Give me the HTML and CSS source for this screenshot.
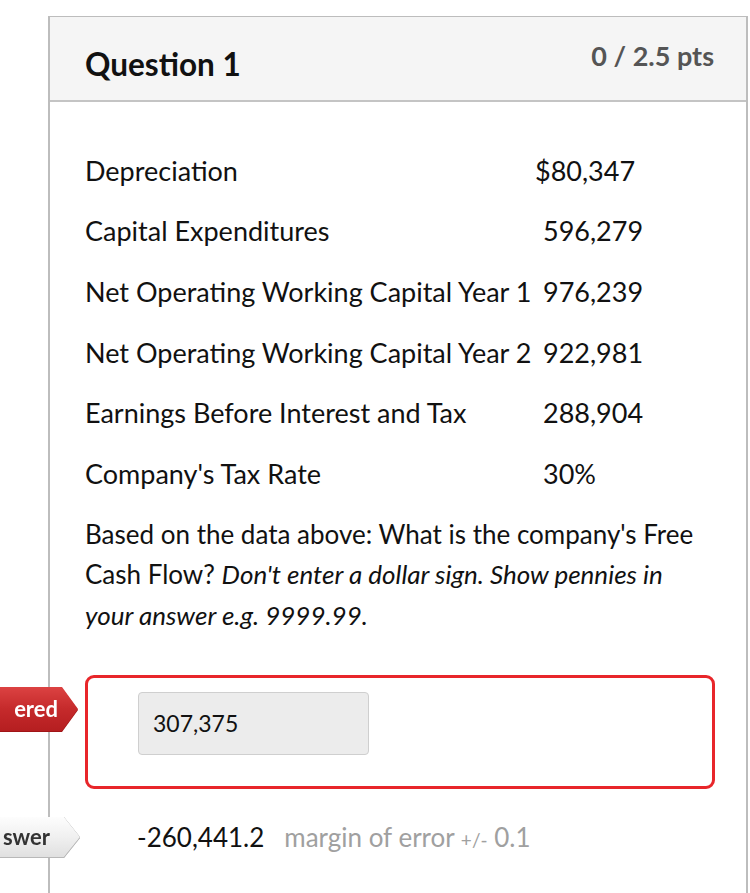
FILE: index.html
```html
<!DOCTYPE html>
<html>
<head>
<meta charset="utf-8">
<link rel="stylesheet" href="styles.css">
</head>
<body>
<div class="card">
  <div class="header">
    <h2 class="title">Question 1</h2>
    <div class="pts">0 / 2.5 pts</div>
  </div>
  <div class="body">
    <table class="data">
      <tr><td class="label">Depreciation</td><td class="val dollar">$80,347</td></tr>
      <tr><td class="label">Capital Expenditures</td><td class="val">596,279</td></tr>
      <tr><td class="label">Net Operating Working Capital Year 1</td><td class="val">976,239</td></tr>
      <tr><td class="label">Net Operating Working Capital Year 2</td><td class="val">922,981</td></tr>
      <tr><td class="label">Earnings Before Interest and Tax</td><td class="val">288,904</td></tr>
      <tr><td class="label">Company's Tax Rate</td><td class="val">30%</td></tr>
    </table>
    <p class="question">Based on the data above: What is the company's Free Cash Flow? <em>Don't enter a dollar sign. Show pennies in your answer e.g. 9999.99.</em></p>
    <div class="answer-wrap">
      <div class="tag-holder tag-holder-wrong"><div class="tag tag-wrong">ered</div></div>
      <div class="answer-box">
        <div class="input">307,375</div>
      </div>
    </div>
    <div class="correct-row">
      <div class="tag-holder tag-holder-correct"><div class="tag tag-correct">swer</div></div>
      <span class="correct-val">-260,441.2</span>
      <span class="margin">margin of error <small>+/-</small> 0.1</span>
    </div>
  </div>
</div>
</body>
</html>
```
FILE: styles.css
```css
html, body {
  margin: 0;
  padding: 0;
  background: #fff;
  font-family: Lato, "Open Sans", sans-serif;
  color: #111;
}
body {
  width: 750px;
  height: 893px;
  overflow: hidden;
}
.card {
  margin: 16px 0 0 48px;
  width: 700px;
  box-sizing: border-box;
  border: 1px solid #bdbdbd;
  border-left-width: 2px;
  border-right-width: 2px;
  border-bottom: none;
  height: 900px;
}
.header {
  background: #f5f5f5;
  border-bottom: 2px solid #c4c4c4;
  height: 85px;
  box-sizing: border-box;
  display: flex;
  justify-content: space-between;
  padding: 0 32px 0 35px;
}
.title {
  margin: 0;
  font-size: 31.5px;
  font-weight: 700;
  color: #111;
  padding-top: 28px;
  line-height: 38px;
}
.pts {
  font-size: 27px;
  font-weight: 700;
  color: #555;
  padding-top: 22px;
  line-height: 34px;
}
.body {
  padding: 38px 0 0 35px;
}
.data {
  border-collapse: collapse;
  font-size: 27px;
}
.data td {
  padding: 0;
  height: 60.6px;
  vertical-align: middle;
}
.label {
  width: 458px;
  white-space: nowrap;
}
.val {
  text-align: left;
}
.dollar {
  position: relative;
  left: -8px;
}
.question {
  margin: 10px 0 0 0;
  font-size: 26px;
  line-height: 40.5px;
  width: 630px;
}
.answer-wrap {
  position: relative;
  margin-top: 40px;
}
.answer-box {
  width: 630px;
  height: 114px;
  box-sizing: border-box;
  border: 3px solid #e8262a;
  border-radius: 9px;
  padding: 14px 0 0 50px;
}
.input {
  width: 231px;
  height: 63px;
  box-sizing: border-box;
  background: #ececec;
  border: 1px solid #cfcfcf;
  border-radius: 4px;
  font-size: 23px;
  line-height: 61px;
  padding-left: 14px;
  color: #111;
}
.tag-holder {
  position: absolute;
  left: -85px;
}
.tag-holder-wrong {
  top: 12px;
  filter: drop-shadow(0 1px 0 #a01416);
}
.tag-holder-correct {
  top: 0;
  filter: drop-shadow(0 0 0.6px #8a8a8a) drop-shadow(0 1px 0 #b8b8b8);
}
.tag {
  height: 44px;
  line-height: 44px;
  font-size: 22px;
  font-weight: 700;
  text-align: right;
  box-sizing: border-box;
}
.tag-wrong {
  width: 78px;
  padding-right: 20px;
  color: #fff;
  background: linear-gradient(#dc4242, #c52a2b 50%, #b51e20);
  clip-path: polygon(0 0, 62px 0, 78px 50%, 62px 100%, 0 100%);
}
.correct-row {
  position: relative;
  margin-top: 28px;
  height: 40px;
  display: flex;
  align-items: center;
  padding-left: 52px;
  font-size: 26px;
}
.tag-correct {
  width: 80px;
  height: 40px;
  line-height: 40px;
  padding-right: 30px;
  color: #333;
  background: linear-gradient(#fdfdfd, #f0f0f0 50%, #e0e0e0);
  clip-path: polygon(0 0, 64px 0, 80px 50%, 64px 100%, 0 100%);
}
.correct-val {
  color: #111;
}
.margin {
  color: #a0a0a0;
  margin-left: 20px;
}
.margin small {
  font-size: 19px;
}
```
